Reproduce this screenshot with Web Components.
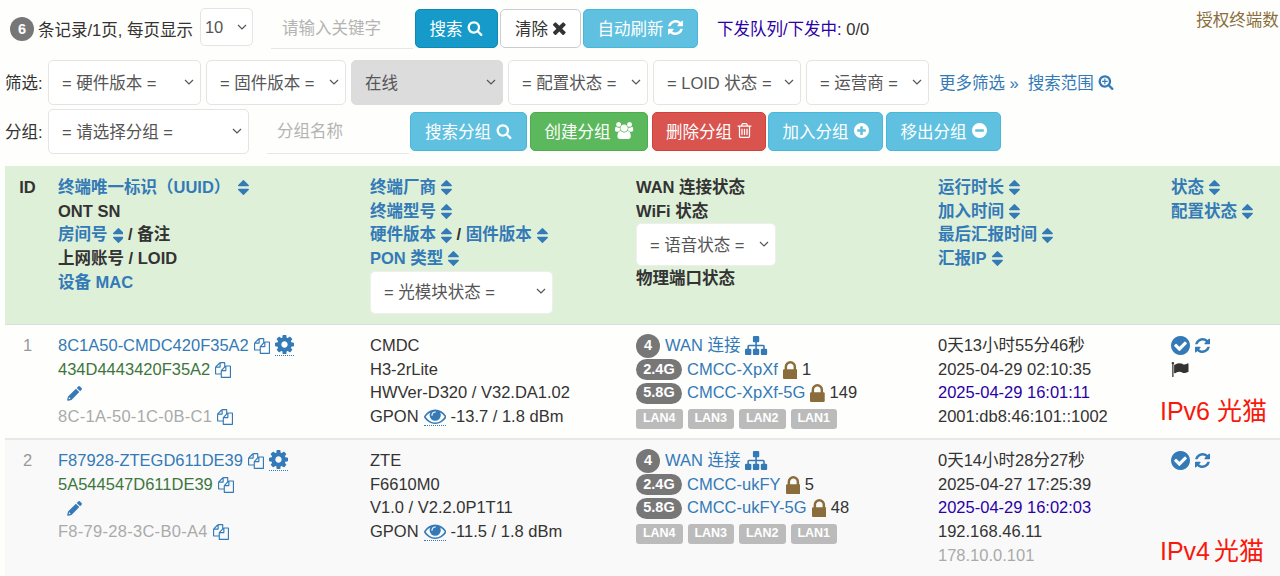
<!DOCTYPE html>
<html lang="zh"><head><meta charset="utf-8"><title>终端列表</title>
<style>
html,body{margin:0;padding:0;height:576px;overflow:hidden;background:#fefefc}
body{font:16.5px "Liberation Sans","Noto Sans CJK SC",sans-serif;color:#333}
</style></head><body>
<x-app></x-app>
<script>
const circ='q0 209-103 385.500t-279.500 279.500-385.500 103-385.500-103-279.500-279.500-103-385.500 103-385.500 279.500-279.500 385.500-103 385.500 103 279.500 279.500 103 385.500z';
const ICONS={
search:['0 0 1792 1792','M1216 832q0-185-131.500-316.500t-316.500-131.500-316.500 131.500-131.500 316.500 131.500 316.500 316.500 131.500 316.500-131.500 131.500-316.500zm512 832q0 52-38 90t-90 38q-54 0-90-38l-343-342q-179 124-399 124-143 0-273.500-55.500t-225-150-150-225-55.500-273.500 55.500-273.500 150-225 225-150 273.500-55.500 273.500 55.500 225 150 150 225 55.500 273.500q0 220-124 399l343 343q37 37 37 90z'],
times:['300 240 1200 1320','M1490 1322q0 40-28 68l-136 136q-28 28-68 28t-68-28l-294-294-294 294q-28 28-68 28t-68-28l-136-136q-28-28-28-68t28-68l294-294-294-294q-28-28-28-68t28-68l136-136q28-28 68-28t68 28l294 294 294-294q28-28 68-28t68 28l136 136q28 28 28 68t-28 68l-294 294 294 294q28 28 28 68z'],
refresh:['128 128 1536 1536','M1639 1056q0 5-1 7-64 268-268 434.500t-478 166.500q-146 0-282.500-55t-243.500-157l-129 129q-19 19-45 19t-45-19-19-45v-448q0-26 19-45t45-19h448q26 0 45 19t19 45-19 45l-137 137q71 66 161 102t187 36q134 0 250-65t186-179q11-17 53-117 8-23 30-23h192q13 0 22.500 9.500t9.500 22.500zm25-800v448q0 26-19 45t-45 19h-448q-26 0-45-19t-19-45 19-45l138-138q-148-137-349-137-134 0-250 65t-186 179q-11 17-53 117-8 23-30 23h-199q-13 0-22.500-9.500t-9.500-22.500v-7q65-268 270-434.500t480-166.500q146 0 284 55.500t245 156.500l130-129q19-19 45-19t45 19 19 45z'],
users:['0 0 1920 1792','M593 896q-162 5-265 128h-134q-82 0-138-40.500t-56-118.500q0-353 124-353 6 0 43.500 21t97.500 42.500 119 21.500q67 0 133-23-5 37-5 66 0 139 81 256zm1071 637q0 120-73 189.500t-194 69.500h-874q-121 0-194-69.500t-73-189.500q0-53 3.500-103.500t14-109 26.500-108.500 43-97.500 62-81 85.500-53.500 111.500-20q10 0 43 21.500t73 48 107 48 135 21.500 135-21.500 107-48 73-48 43-21.500q61 0 111.500 20t85.500 53.500 62 81 43 97.500 26.500 108.500 14 109 3.500 103.500zm-1024-1277q0 106-75 181t-181 75-181-75-75-181 75-181 181-75 181 75 75 181zm704 384q0 159-112.500 271.500t-271.500 112.500-271.500-112.500-112.500-271.500 112.500-271.500 271.500-112.500 271.500 112.500 112.500 271.500zm576 225q0 78-56 118.500t-138 40.500h-134q-103-123-265-128 81-117 81-256 0-29-5-66 66 23 133 23 59 0 119-21.500t97.500-42.500 43.500-21q124 0 124 353zm-128-609q0 106-75 181t-181 75-181-75-75-181 75-181 181-75 181 75 75 181z'],
trash:['128 128 1536 1536','M704 736v576q0 14-9 23t-23 9h-64q-14 0-23-9t-9-23v-576q0-14 9-23t23-9h64q14 0 23 9t9 23zm256 0v576q0 14-9 23t-23 9h-64q-14 0-23-9t-9-23v-576q0-14 9-23t23-9h64q14 0 23 9t9 23zm256 0v576q0 14-9 23t-23 9h-64q-14 0-23-9t-9-23v-576q0-14 9-23t23-9h64q14 0 23 9t9 23zm128 724v-948h-896v948q0 22 7 40.500t14.500 27 10.500 8.500h832q3 0 10.500-8.500t14.500-27 7-40.500zm-672-1076h448l-48-117q-7-9-17-11h-317q-10 2-17 11zm928 32v64q0 14-9 23t-23 9h-96v948q0 83-47 143.500t-113 60.500h-832q-66 0-113-58.500t-47-141.500v-952h-96q-14 0-23-9t-9-23v-64q0-14 9-23t23-9h309l70-167q15-37 54-63t79-26h320q40 0 79 26t54 63l70 167h309q14 0 23 9t9 23z'],
plus:['128 128 1536 1536','M1344 960v-128q0-26-19-45t-45-19h-256v-256q0-26-19-45t-45-19h-128q-26 0-45 19t-19 45v256h-256q-26 0-45 19t-19 45v128q0 26 19 45t45 19h256v256q0 26 19 45t45 19h128q26 0 45-19t19-45v-256h256q26 0 45-19t19-45zm320-64'+circ],
minus:['128 128 1536 1536','M1344 960v-128q0-26-19-45t-45-19h-768q-26 0-45 19t-19 45v128q0 26 19 45t45 19h768q26 0 45-19t19-45zm320-64'+circ],
zoom:['0 0 1792 1792','M1088 800v64q0 13-9.500 22.500t-22.500 9.500h-224v224q0 13-9.500 22.500t-22.500 9.500h-64q-13 0-22.500-9.500t-9.500-22.500v-224h-224q-13 0-22.500-9.500t-9.500-22.500v-64q0-13 9.500-22.500t22.500-9.500h224v-224q0-13 9.500-22.500t22.500-9.500h64q13 0 22.500 9.500t9.500 22.500v224h224q13 0 22.500 9.500t9.500 22.500zm128 32q0-185-131.500-316.500t-316.500-131.500-316.500 131.500-131.500 316.500 131.500 316.500 316.500 131.500 316.500-131.500 131.500-316.500zm512 832q0 53-37.500 90.500t-90.500 37.500q-54 0-90-38l-343-342q-179 124-399 124-143 0-273.500-55.500t-225-150-150-225-55.500-273.500 55.500-273.500 150-225 225-150 273.500-55.500 273.500 55.500 225 150 150 225 55.500 273.500q0 220-124 399l343 343q37 37 37 90z'],
sort:['384 192 1024 1408','M1408 1088q0 26-19 45l-448 448q-19 19-45 19t-45-19l-448-448q-19-19-19-45t19-45 45-19h896q26 0 45 19t19 45zm0-384q0 26-19 45t-45 19h-896q-26 0-45-19t-19-45 19-45l448-448q19-19 45-19t45 19l448 448q19 19 19 45z'],
copy:['0 0 1792 1792','M1696 384q40 0 68 28t28 68v1216q0 40-28 68t-68 28h-960q-40 0-68-28t-28-68v-288h-544q-40 0-68-28t-28-68v-672q0-40 20-88t48-76l408-408q28-28 76-48t88-20h416q40 0 68 28t28 68v328q68-40 128-40h416zm-544 213l-299 299h299v-299zm-640-384l-299 299h299v-299zm196 647l316-316v-416h-384v416q0 40-28 68t-68 28h-416v640h512v-256q0-40 20-88t48-76zm956 804v-1152h-384v416q0 40-28 68t-68 28h-416v640h896z'],
cog:['128 128 1536 1536','M1152 896q0-106-75-181t-181-75-181 75-75 181 75 181 181 75 181-75 75-181zm512-109v222q0 12-8 23t-20 13l-185 28q-19 54-39 91 35 50 107 138 10 12 10 25t-9 23q-27 37-99 108t-94 71q-12 0-26-9l-138-108q-44 23-91 38-16 136-29 186-7 28-36 28h-222q-14 0-24.500-8.500t-11.500-21.500l-28-184q-49-16-90-37l-141 107q-10 9-25 9-14 0-25-11-126-114-165-168-7-10-7-23 0-12 8-23 15-21 51-66.500t54-70.500q-27-50-41-99l-183-27q-13-2-21-12.500t-8-23.500v-222q0-12 8-23t19-13l186-28q14-46 39-92-40-57-107-138-10-12-10-24 0-10 9-23 26-36 98.500-107.500t94.500-71.500q13 0 26 10l138 107q44-23 91-38 16-136 29-186 7-28 36-28h222q14 0 24.500 8.500t11.500 21.500l28 184q49 16 90 37l142-107q9-9 24-9 13 0 25 10 129 119 165 170 7 8 7 22 0 12-8 23-15 21-51 66.500t-54 70.500q26 50 41 98l183 28q13 2 21 12.500t8 23.500z'],
pencil:['0 0 16 16','M11.700 .7a1.700 1.700 0 0 1 2.400 0l1.200 1.200a1.700 1.700 0 0 1 0 2.400l-1.300 1.300-3.600-3.600zM9.500 2.900l3.600 3.600-8.300 8.300-3.400 1L.3 15.400.100 15l1-3.800zM2.300 12l-.6 2.200 2.200-.6z'],
eye:['0 256 1792 1280','M1664 960q-152-236-381-353 61 104 61 225 0 185-131.500 316.500t-316.500 131.500-316.500-131.500-131.500-316.500q0-121 61-225-229 117-381 353 133 205 333.500 326.500t434.500 121.500 434.500-121.500 333.500-326.500zm-720-384q0-20-14-34t-34-14q-125 0-214.500 89.500t-89.500 214.500q0 20 14 34t34 14 34-14 14-34q0-86 61-147t147-61q20 0 34-14t14-34zm848 384q0 34-20 69-140 230-376.500 368.500t-499.500 138.500-499.500-139-376.500-368q-20-35-20-69t20-69q140-229 376.500-368t499.500-139 499.500 139 376.500 368q20 35 20 69z'],
sitemap:['0 128 1792 1536','M1792 1248v320q0 40-28 68t-68 28h-320q-40 0-68-28t-28-68v-320q0-40 28-68t68-28h96v-192h-512v192h96q40 0 68 28t28 68v320q0 40-28 68t-68 28h-320q-40 0-68-28t-28-68v-320q0-40 28-68t68-28h96v-192h-512v192h96q40 0 68 28t28 68v320q0 40-28 68t-68 28h-320q-40 0-68-28t-28-68v-320q0-40 28-68t68-28h96v-192q0-52 38-90t90-38h512v-192h-96q-40 0-68-28t-28-68v-320q0-40 28-68t68-28h320q40 0 68 28t28 68v320q0 40-28 68t-68 28h-96v192h512q52 0 90 38t38 90v192h96q40 0 68 28t28 68z'],
lock:['320 128 1152 1408','M640 768h512v-192q0-106-75-181t-181-75-181 75-75 181v192zm832 96v576q0 40-28 68t-68 28h-960q-40 0-68-28t-28-68v-576q0-40 28-68t68-28h32v-192q0-184 132-316t316-132 316 132 132 316v192h32q40 0 68 28t28 68z'],
check:['128 128 1536 1536','M1412 734q0-28-18-46l-91-90q-19-19-45-19t-45 19l-408 407-226-226q-19-19-45-19t-45 19l-91 90q-18 18-18 46 0 27 18 45l362 362q19 19 45 19 27 0 46-19l543-543q18-18 18-45zm252 162'+circ],
flag:['0 128 1792 1536','M320 256q0 72-64 110v1266q0 13-9.500 22.500t-22.500 9.500h-64q-13 0-22.500-9.500t-9.500-22.500v-1266q-64-38-64-110 0-53 37.500-90.500t90.500-37.500 90.500 37.500 37.500 90.500zm1472 64v763q0 25-12.500 38.500t-39.500 27.500q-215 116-369 116-61 0-123.500-22t-108.500-48-115.500-48-142.500-22q-192 0-464 146-17 9-33 9-26 0-45-19t-19-45v-742q0-32 31-55 21-14 79-43 236-120 421-120 107 0 200 29t219 88q38 19 88 19 54 0 117.500-21t110-47 88-47 54.500-21q26 0 45 19t19 45z']
};
function def(name,css,html,extra){
  customElements.define(name,class extends HTMLElement{
    constructor(){super();this.attachShadow({mode:'open'}).innerHTML='<style>'+css+'</style>'+html;}
    connectedCallback(){extra&&extra(this);}
  });
}
def('x-icon',':host{display:inline-flex;flex:none;line-height:0}svg{display:block;fill:currentColor}','',el=>{
  if(el.shadowRoot.querySelector('svg'))return;
  const [vb,d]=ICONS[el.getAttribute('name')];
  const p=vb.split(' ').map(Number),h=+(el.getAttribute('size')||16),w=h*p[2]/p[3];
  el.shadowRoot.innerHTML+=`<svg xmlns="http://www.w3.org/2000/svg" viewBox="${vb}" width="${w}" height="${h}"><path d="${d}"/></svg>`;
});
def('x-btn',`:host{display:inline-flex;align-items:center;justify-content:center;gap:5px;height:39px;box-sizing:border-box;padding:0 14.500px 2px;border:1px solid #46b8da;border-radius:5px;background:#5fc1df;color:#fff;white-space:nowrap;flex:none}
:host([kind=primary]){background:#169ac9;border-color:#1088b4}
:host([kind=plain]){background:#fff;border-color:#ccc;color:#333}
:host([kind=green]){background:#5cb85c;border-color:#4cae4c}
:host([kind=red]){background:#d9534f;border-color:#d43f3a}`,'<slot></slot>');
def('x-select',`:host{display:flex;align-items:center;justify-content:space-between;box-sizing:border-box;height:45px;padding:0 6px 2px 13px;border:1.500px solid #e4e4e4;border-radius:5px;background:#fff;color:#555;white-space:nowrap;flex:none}
:host([selected]){background:#dcdcdd;border-color:#dcdcdd}
svg{flex:none;fill:none;stroke:#555;stroke-width:1.200}`,'<slot></slot><svg width="10" height="6" viewBox="0 0 10 6"><path d="M1 1l4 4 4-4"/></svg>');
def('x-field',`:host{display:flex;align-items:center;box-sizing:border-box;padding:0 0 3px 11px;border-bottom:1.500px solid #e6e6e6;color:#b4b4b4;white-space:nowrap;flex:none}`,'<slot></slot>');
def('x-badge',`:host{display:inline-flex;align-items:center;justify-content:center;box-sizing:border-box;height:21px;min-width:24px;border-radius:11px;background:#777;color:#fff;font-weight:700;font-size:14.500px;flex:none}
:host([wide]){width:46px}:host([round]){height:24px;width:24px;border-radius:50%}`,'<slot></slot>');
def('x-port',`:host{display:inline-flex;align-items:center;justify-content:center;width:46.500px;height:20px;border-radius:3px;background:#bbb;color:#fff;font-weight:700;font-size:12.500px;flex:none}`,'<slot></slot>');
def('x-line',`:host{display:flex;align-items:center;height:23.700px;line-height:23.700px;white-space:nowrap}`,'<slot></slot>');
def('x-sort',`:host{display:inline-flex;align-items:center;gap:5px;color:#337ab7;font-weight:700;white-space:nowrap}`,'<slot></slot><x-icon name="sort" size="15"></x-icon>');
def('x-row',`:host{display:grid;position:relative;grid-template-columns:45px 312px 266px 302px 233px 1fr;margin-left:5px;background:var(--row-bg,transparent);box-sizing:border-box}`,'<slot></slot>');
def('x-app',`
:host{display:block;width:1280px;height:576px;overflow:hidden;padding-top:8px;box-sizing:border-box}
.bar{display:flex;align-items:center;padding-left:5px}
.top{height:41px;padding-left:10px;white-space:nowrap}
.filter{height:45px;margin-top:11px;gap:5px}
.group{height:45px;margin-top:4px}
.lab{width:43px;flex:none;margin-right:-5px;padding-bottom:2px}
.group .lab{margin-right:0}
.a{color:#337ab7;white-space:nowrap}
.cell{padding:9px 8px 0;min-width:0}
.id{text-align:center;color:#999}
.head{background:#dff0d8;height:159px;border-bottom:1px solid #ddd;font-weight:700;margin-top:12px}
.head .cell{padding-top:10px;color:#333}
.r1{height:115px;border-bottom:2px solid #e8e8e8}
.r2{height:136px;--row-bg:#f9f9f9}
.g{color:#3c763d}.m{color:#aaa}.p{color:#2a00a8}
.mac{letter-spacing:.28px}
.gap5{margin-left:5px}
.dot{display:inline-flex;border-bottom:1px dotted #337ab7;padding-bottom:1px;margin-left:5px;color:#337ab7}
.blue{color:#337ab7}
.note{position:absolute;left:1155px;color:#f8180c;font-size:25px;white-space:nowrap;line-height:30px}
.ports{display:flex;gap:5px;align-items:center}
.lan{margin-top:2px}
`,`
<div class="bar top">
  <x-badge round>6</x-badge><span style="margin-left:4px">条记录/1页, 每页显示</span>
  <x-select style="width:53px;height:38px;margin:0 0 3px 7px;padding:0 5px 0 4px">10</x-select>
  <x-field style="width:142px;height:40px;margin-left:18px">请输入关键字</x-field>
  <x-btn kind="primary" style="margin-left:2px;width:83px">搜索<x-icon name="search" size="16"></x-icon></x-btn>
  <x-btn kind="plain" style="margin-left:2px;width:81px">清除<x-icon name="times" size="14"></x-icon></x-btn>
  <x-btn style="margin-left:2px;width:115px">自动刷新<x-icon name="refresh" size="15"></x-icon></x-btn>
  <span class="p" style="margin:0 0 2px 19px;white-space:nowrap">下发队列/下发中: <span style="color:#333">0/0</span></span>
  <span style="flex:none;align-self:flex-start;margin:-1px 0 0 327px;color:#8a6d3b;white-space:nowrap">授权终端数</span>
</div>
<div class="bar filter">
  <span class="lab">筛选:</span>
  <x-select style="width:153px">= 硬件版本 =</x-select>
  <x-select style="width:140px">= 固件版本 =</x-select>
  <x-select selected style="width:152px">在线</x-select>
  <x-select style="width:140px">= 配置状态 =</x-select>
  <x-select style="width:148px">= LOID 状态 =</x-select>
  <x-select style="width:123px">= 运营商 =</x-select>
  <span class="a" style="margin:0 0 2px 5px">更多筛选 »</span>
  <span class="a" style="margin:0 0 2px 4px;display:inline-flex;align-items:center;gap:4px">搜索范围<x-icon name="zoom" size="16"></x-icon></span>
</div>
<div class="bar group">
  <span class="lab">分组:</span>
  <x-select style="width:201px">= 请选择分组 =</x-select>
  <x-field style="width:142px;height:44px;margin-left:18px;padding-left:10px">分组名称</x-field>
  <x-btn style="margin-left:1px;width:117px">搜索分组<x-icon name="search" size="16"></x-icon></x-btn>
  <x-btn kind="green" style="margin-left:3px;width:118px">创建分组<x-icon name="users" size="17"></x-icon></x-btn>
  <x-btn kind="red" style="margin-left:4px;width:114px">删除分组<x-icon name="trash" size="15"></x-icon></x-btn>
  <x-btn style="margin-left:2px;width:115px">加入分组<x-icon name="plus" size="15"></x-icon></x-btn>
  <x-btn style="margin-left:3px;width:115px">移出分组<x-icon name="minus" size="15"></x-icon></x-btn>
</div>
<x-row class="head">
  <div class="cell id"><x-line style="justify-content:center">ID</x-line></div>
  <div class="cell">
    <x-line><x-sort style="gap:8px">终端唯一标识（UUID）</x-sort></x-line>
    <x-line>ONT SN</x-line>
    <x-line><x-sort>房间号</x-sort>&nbsp;/ 备注</x-line>
    <x-line>上网账号 / LOID</x-line>
    <x-line class="a">设备 MAC</x-line>
  </div>
  <div class="cell">
    <x-line><x-sort>终端厂商</x-sort></x-line>
    <x-line><x-sort>终端型号</x-sort></x-line>
    <x-line><x-sort>硬件版本</x-sort>&nbsp;/&nbsp;<x-sort>固件版本</x-sort></x-line>
    <x-line><x-sort>PON 类型</x-sort></x-line>
    <x-select style="width:183px;height:43px;font-weight:400;border-color:#eee">= 光模块状态 =</x-select>
  </div>
  <div class="cell">
    <x-line>WAN 连接状态</x-line>
    <x-line>WiFi 状态</x-line>
    <x-select style="width:140px;height:43px;font-weight:400;border-color:#eee">= 语音状态 =</x-select>
    <x-line style="margin-top:1px">物理端口状态</x-line>
  </div>
  <div class="cell">
    <x-line><x-sort>运行时长</x-sort></x-line>
    <x-line><x-sort>加入时间</x-sort></x-line>
    <x-line><x-sort>最后汇报时间</x-sort></x-line>
    <x-line><x-sort>汇报IP</x-sort></x-line>
  </div>
  <div class="cell">
    <x-line><x-sort>状态</x-sort></x-line>
    <x-line><x-sort>配置状态</x-sort></x-line>
  </div>
</x-row>
<x-row class="r1">
  <div class="cell id"><x-line style="justify-content:center">1</x-line></div>
  <div class="cell">
    <x-line><span class="a">8C1A50-CMDC420F35A2</span><x-icon class="blue gap5" name="copy" size="16"></x-icon><span class="dot"><x-icon name="cog" size="19"></x-icon></span></x-line>
    <x-line><span class="g">434D4443420F35A2</span><x-icon class="blue gap5" name="copy" size="16"></x-icon></x-line>
    <x-line><x-icon class="blue" style="margin-left:9px" name="pencil" size="15"></x-icon></x-line>
    <x-line><span class="m mac">8C-1A-50-1C-0B-C1</span><x-icon class="blue gap5" name="copy" size="16"></x-icon></x-line>
  </div>
  <div class="cell">
    <x-line>CMDC</x-line><x-line>H3-2rLite</x-line><x-line>HWVer-D320 / V32.DA1.02</x-line>
    <x-line>GPON<span class="dot"><x-icon name="eye" size="16"></x-icon></span>&nbsp;-13.7 / 1.8 dBm</x-line>
  </div>
  <div class="cell">
    <x-line><x-badge round>4</x-badge><span class="a gap5">WAN 连接</span><x-icon class="blue gap5" name="sitemap" size="19"></x-icon></x-line>
    <x-line><x-badge wide>2.4G</x-badge><span class="a gap5">CMCC-XpXf</span><x-icon class="gap5" style="color:#8a6d3b" name="lock" size="18"></x-icon>&nbsp;1</x-line>
    <x-line><x-badge wide>5.8G</x-badge><span class="a gap5">CMCC-XpXf-5G</span><x-icon class="gap5" style="color:#8a6d3b" name="lock" size="18"></x-icon>&nbsp;149</x-line>
    <x-line class="ports lan"><x-port>LAN4</x-port><x-port>LAN3</x-port><x-port>LAN2</x-port><x-port>LAN1</x-port></x-line>
  </div>
  <div class="cell">
    <x-line>0天13小时55分46秒</x-line><x-line>2025-04-29 02:10:35</x-line><x-line class="p">2025-04-29 16:01:11</x-line><x-line>2001:db8:46:101::1002</x-line>
  </div>
  <div class="cell">
    <x-line><x-icon class="blue" name="check" size="19"></x-icon><x-icon class="blue gap5" name="refresh" size="15"></x-icon></x-line>
    <x-line><x-icon name="flag" size="15"></x-icon></x-line>
  </div>
  <span class="note" style="top:71px">IPv6 光猫</span>
</x-row>
<x-row class="r2">
  <div class="cell id"><x-line style="justify-content:center">2</x-line></div>
  <div class="cell">
    <x-line><span class="a">F87928-ZTEGD611DE39</span><x-icon class="blue gap5" name="copy" size="16"></x-icon><span class="dot"><x-icon name="cog" size="19"></x-icon></span></x-line>
    <x-line><span class="g">5A544547D611DE39</span><x-icon class="blue gap5" name="copy" size="16"></x-icon></x-line>
    <x-line><x-icon class="blue" style="margin-left:9px" name="pencil" size="15"></x-icon></x-line>
    <x-line><span class="m mac">F8-79-28-3C-B0-A4</span><x-icon class="blue gap5" name="copy" size="16"></x-icon></x-line>
  </div>
  <div class="cell">
    <x-line>ZTE</x-line><x-line>F6610M0</x-line><x-line>V1.0 / V2.2.0P1T11</x-line>
    <x-line>GPON<span class="dot"><x-icon name="eye" size="16"></x-icon></span>&nbsp;-11.5 / 1.8 dBm</x-line>
  </div>
  <div class="cell">
    <x-line><x-badge round>4</x-badge><span class="a gap5">WAN 连接</span><x-icon class="blue gap5" name="sitemap" size="19"></x-icon></x-line>
    <x-line><x-badge wide>2.4G</x-badge><span class="a gap5">CMCC-ukFY</span><x-icon class="gap5" style="color:#8a6d3b" name="lock" size="18"></x-icon>&nbsp;5</x-line>
    <x-line><x-badge wide>5.8G</x-badge><span class="a gap5">CMCC-ukFY-5G</span><x-icon class="gap5" style="color:#8a6d3b" name="lock" size="18"></x-icon>&nbsp;48</x-line>
    <x-line class="ports lan"><x-port>LAN4</x-port><x-port>LAN3</x-port><x-port>LAN2</x-port><x-port>LAN1</x-port></x-line>
  </div>
  <div class="cell">
    <x-line>0天14小时28分27秒</x-line><x-line>2025-04-27 17:25:39</x-line><x-line class="p">2025-04-29 16:02:03</x-line><x-line>192.168.46.11</x-line><x-line class="m">178.10.0.101</x-line>
  </div>
  <div class="cell">
    <x-line><x-icon class="blue" name="check" size="19"></x-icon><x-icon class="blue gap5" name="refresh" size="15"></x-icon></x-line>
  </div>
  <span class="note" style="top:96px;word-spacing:-3px">IPv4 光猫</span>
</x-row>`);
</script>
</body></html>
